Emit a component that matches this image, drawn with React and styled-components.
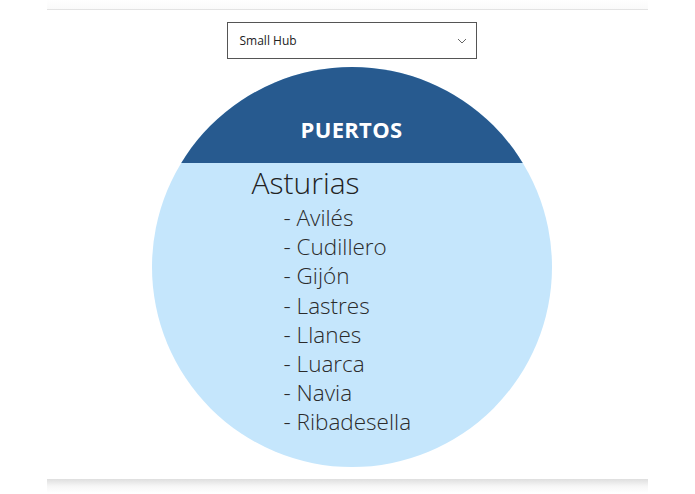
import React from "react";
import styled, { createGlobalStyle } from "styled-components";

const GlobalStyle = createGlobalStyle`
    body{
        margin:0;
        background:#ffffff;
        font-family:"Open Sans", "Liberation Sans", sans-serif;
    }
`

const Page = styled.div`
    width:601px;
    margin:0 auto;
    display:flex;
    flex-direction:column;
    align-items:center;
`

const TopCard = styled.div`
    width:100%;
    height:9px;
    border-bottom:1px solid #e3e3e3;
    background:linear-gradient(#ffffff, #fafafa);
`

const Content = styled.div`
    width:100%;
    box-sizing:border-box;
    padding-left:8px;
    display:flex;
    flex-direction:column;
    align-items:center;
`

const SelectBox = styled.div`
    margin-top:12px;
    width:250px;
    height:37px;
    box-sizing:border-box;
    border:1px solid #555;
    display:flex;
    align-items:center;
    justify-content:space-between;
    padding:0 9px 0 12px;
    font-size:12px;
    color:#222;
`

const Circle = styled.div`
    margin-top:8px;
    width:400px;
    height:400px;
    border-radius:50%;
    overflow:hidden;
    background:#c5e6fc;
    display:flex;
    flex-direction:column;
`

const Header = styled.div`
    height:96px;
    background:#275a8f;
    color:#fff;
    display:flex;
    align-items:flex-end;
    justify-content:center;
    padding-bottom:19px;
    box-sizing:border-box;
    font-weight:700;
    font-size:22px;
    letter-spacing:.3px;
`

const Region = styled.div`
    padding-left:100px;
    margin-top:2px;
    font-size:30px;
    font-weight:300;
    color:#222;
    line-height:36px;
`

const List = styled.ul`
    list-style:none;
    margin:2px 0 0;
    padding:0 0 0 132px;
    li{
        font-size:22.5px;
        font-weight:300;
        color:#2b2b2b;
        line-height:29.2px;
    }
`

const BottomCard = styled.div`
    margin-top:12px;
    width:100%;
    height:14px;
    background:linear-gradient(#dedede, #f6f6f6 50%, #ffffff);
`

const puertos = ["Avilés", "Cudillero", "Gijón", "Lastres", "Llanes", "Luarca", "Navia", "Ribadesella"]

const App = () => {
    return (
        <>
            <GlobalStyle />
            <Page>
                <TopCard />
                <Content>
                    <SelectBox>
                        <span>Small Hub</span>
                        <svg width="10" height="6" viewBox="0 0 10 6">
                            <path d="M1 1 L5 5 L9 1" fill="none" stroke="#666" strokeWidth="1" />
                        </svg>
                    </SelectBox>
                    <Circle>
                        <Header>PUERTOS</Header>
                        <Region>Asturias</Region>
                        <List>
                            {puertos.map(p => <li key={p}>- {p}</li>)}
                        </List>
                    </Circle>
                </Content>
                <BottomCard />
            </Page>
        </>
    )
}

export default App
